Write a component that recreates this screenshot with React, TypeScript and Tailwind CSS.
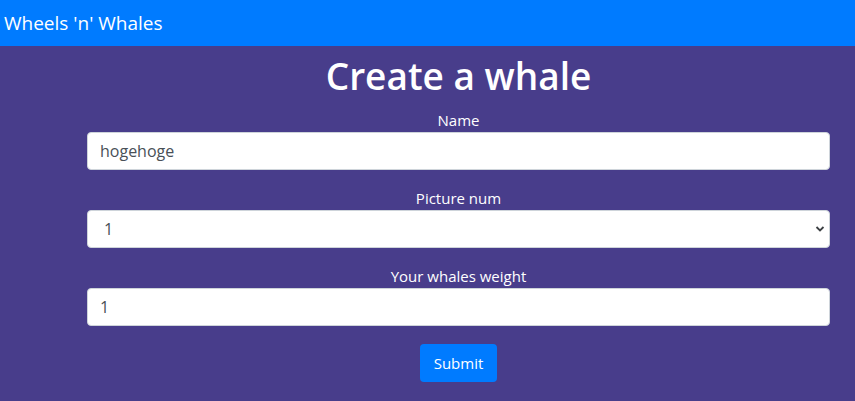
import React from "react";

export default function App() {
  const font = { fontFamily: '"Open Sans", "Noto Sans", sans-serif' };
  return (
    <div className="min-h-[401px] bg-[#483d8b] text-white" style={font}>
      <nav className="h-[46px] bg-[#007bff] flex items-center px-[4px]">
        <span className="text-[19px] leading-[30px] text-white">Wheels 'n' Whales</span>
      </nav>
      <div className="pl-[87px] pr-[25px] pt-[6px]">
        <h1 className="text-[37px] leading-[48px] font-semibold text-center mb-[8px]">Create a whale</h1>
        <form className="flex flex-col" onSubmit={(e) => e.preventDefault()}>
          <div className="mb-[16px] flex flex-col">
            <label className="text-[15px] leading-[24px] text-center">Name</label>
            <input
              defaultValue="hogehoge"
              className="h-[38px] w-full rounded-[4px] border border-[#ced4da] bg-white px-[12px] text-[16px] text-[#495057] outline-none"
              style={font}
            />
          </div>
          <div className="mb-[16px] flex flex-col">
            <label className="text-[15px] leading-[24px] text-center">Picture num</label>
            <div className="relative">
              <select
                defaultValue="1"
                className="h-[38px] w-full appearance-none rounded-[4px] border border-[#ced4da] bg-white pl-[16px] pr-[30px] text-[16px] text-[#495057] outline-none"
                style={font}
              >
                <option value="1">1</option>
                <option value="2">2</option>
                <option value="3">3</option>
              </select>
              <svg
                className="pointer-events-none absolute right-[5px] top-[15px]"
                width="10"
                height="8"
                viewBox="0 0 10 8"
              >
                <path d="M1.5 2 L5 5.5 L8.5 2" fill="none" stroke="#3c4043" strokeWidth="1.8" />
              </svg>
            </div>
          </div>
          <div className="mb-[18px] flex flex-col">
            <label className="text-[15px] leading-[24px] text-center">Your whales weight</label>
            <input
              defaultValue="1"
              className="h-[38px] w-full rounded-[4px] border border-[#ced4da] bg-white px-[12px] text-[16px] text-[#495057] outline-none"
              style={font}
            />
          </div>
          <div className="flex justify-center">
            <button
              type="submit"
              className="h-[38px] w-[77px] rounded-[4px] bg-[#007bff] text-[15px] text-white"
              style={font}
            >
              Submit
            </button>
          </div>
        </form>
      </div>
    </div>
  );
}
